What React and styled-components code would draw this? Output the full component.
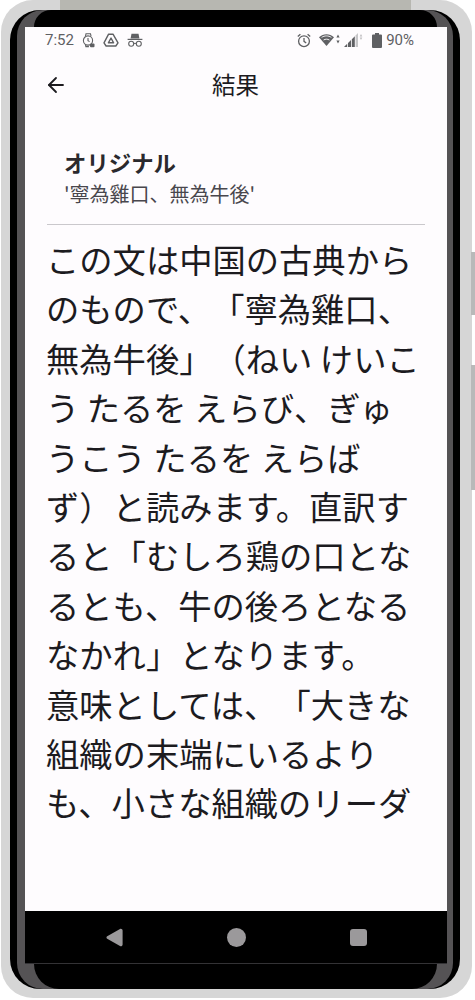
import React from "react";
import styled, { createGlobalStyle } from "styled-components";
import { ArrowLeft } from "lucide-react";

const Global = createGlobalStyle`
  html, body {
    margin: 0;
    padding: 0;
    background: #fff;
  }
`;

const Page = styled.div`
  width: 475px;
  height: 1000px;
  box-sizing: border-box;
  padding: 0 3px 2px 1px;
  overflow: hidden;
  font-family: "Noto Sans CJK JP", "Noto Sans", sans-serif;
  text-spacing-trim: space-all;
`;

const Shell = styled.div`
  position: relative;
  height: 100%;
  box-sizing: border-box;
  padding: 10px 12px 9px 9px;
  background: #d6d6d6;
  border-radius: 32px;
`;

const TopStrip = styled.div`
  position: absolute;
  top: 0;
  left: 59px;
  right: 61px;
  height: 10px;
  background: #b7b7b1;
`;

const SideKey = styled.div`
  position: absolute;
  right: -3px;
  top: ${(p) => p.$top}px;
  width: 4px;
  height: ${(p) => p.$h}px;
  background: #b9b9b9;
`;

const Bezel = styled.div`
  height: 100%;
  box-sizing: border-box;
  padding: 0 7px;
  background: #000;
  border-radius: 30px;
`;

const Inner = styled.div`
  height: 100%;
  box-sizing: border-box;
  padding: 0 6px 0 8px;
  background: #555355;
  border-radius: 26px;
`;

const Column = styled.div`
  height: 100%;
  display: flex;
  flex-direction: column;
`;

const TopBand = styled.div`
  height: 17px;
  margin: 0 10px 0 9px;
  background: #000;
  border-radius: 20px 20px 0 0;
`;

const Screen = styled.div`
  height: 884px;
  background: #fefcfe;
  display: flex;
  flex-direction: column;
  overflow: hidden;
`;

const StatusBar = styled.div`
  height: 26px;
  box-sizing: border-box;
  padding: 0 33px 0 20px;
  display: flex;
  align-items: center;
  justify-content: space-between;
  color: #5f6063;
  font: 400 15px "Roboto", sans-serif;
`;

const StatusGroup = styled.div`
  display: flex;
  align-items: center;
  gap: ${(p) => p.$gap || 8}px;
`;

const SignalSlot = styled.div`
  display: flex;
  margin: 0 1px 0 -5px;
`;

const AppBar = styled.div`
  height: 64px;
  box-sizing: border-box;
  padding: 0 1px 2px 0;
  position: relative;
  display: flex;
  align-items: center;
  justify-content: center;
  color: #1c1b1f;
  font-size: 23.5px;
`;

const BackButton = styled.div`
  position: absolute;
  left: 19px;
  top: 20px;
  display: flex;
`;

const Original = styled.div`
  padding: 30px 39px 0;
  height: 107px;
  box-sizing: border-box;
`;

const OriginalTitle = styled.div`
  font-size: 22.4px;
  font-weight: 700;
  line-height: 31px;
  color: #2a292d;
`;

const OriginalText = styled.div`
  font-size: 20px;
  line-height: 31px;
  color: #49474d;
  white-space: nowrap;
`;

const Divider = styled.div`
  height: 1px;
  margin: 0 22px;
  background: #cac8cc;
`;

const Body = styled.div`
  padding: 9px 25px 0 21px;
  font-size: 33.3px;
  line-height: 49.4px;
  color: #1c1b1f;
`;

const NavBar = styled.div`
  height: 52px;
  background: #000;
  display: flex;
  align-items: center;
  justify-content: center;
  gap: 104px;
`;

const NavCircle = styled.div`
  width: 19px;
  height: 19px;
  border-radius: 50%;
  background: #9b999b;
`;

const NavSquare = styled.div`
  width: 17px;
  height: 17px;
  border-radius: 3px;
  background: #9b999b;
`;

const ChinLine = styled.div`
  height: 1px;
  background: #333235;
`;

const Chin = styled.div`
  flex: 1;
  margin: 0 10px 0 9px;
  background: #000;
  border-radius: 0 0 26px 26px;
`;

const WatchIcon = () => (
  <svg width="13" height="15" viewBox="0 0 13 15" fill="none" stroke="currentColor" strokeWidth="1.1">
    <path d="M3.5 3 4 .8h4.5L9 3M3.5 12l.4 1.6h3" />
    <circle cx="6" cy="7.5" r="4.6" />
    <path d="M6 5v2.6l1.6 1" />
    <rect x="8" y="10.5" width="4.5" height="3.8" rx="1" fill="currentColor" stroke="none" />
  </svg>
);

const DriveIcon = () => (
  <svg width="16" height="14" viewBox="0 0 16 14" fill="none" stroke="currentColor" strokeWidth="1.4" strokeLinejoin="round">
    <path d="M5.6 1.2h4.4l5 8.6-2.2 3.2H3.1L1 9.8z" />
    <path d="M8 5 5.4 9.8h5.2z" />
  </svg>
);

const IncognitoIcon = () => (
  <svg width="16" height="14" viewBox="0 0 16 14" fill="none" stroke="currentColor">
    <path d="M3.6 5.6 4.5 .8h7l.9 4.8z" fill="currentColor" stroke="none" />
    <path d="M.6 6.4h14.8" strokeWidth="1.2" />
    <circle cx="4.2" cy="10.8" r="2.5" strokeWidth="1.1" />
    <circle cx="11.8" cy="10.8" r="2.5" strokeWidth="1.1" />
    <path d="M6.7 10.4h2.6" strokeWidth="1" />
  </svg>
);

const AlarmIcon = () => (
  <svg width="14" height="15" viewBox="0 0 14 15" fill="none" stroke="currentColor" strokeWidth="1.3">
    <circle cx="7" cy="8.2" r="5.4" />
    <path d="M7 5v3.4l2.2 1.6M.8 3.6 3.4 1.2M13.2 3.6 10.6 1.2" />
  </svg>
);

const WifiIcon = () => (
  <svg width="21" height="14" viewBox="0 0 21 14" fill="currentColor">
    <path d="M7.5 13 0 4.2C4.4.2 10.6.2 15 4.2z" />
    <path d="M2.6 4.4c3-2 6.8-2 9.8 0M4.6 7c1.8-1.1 4-1.1 5.8 0" stroke="#fefcfe" strokeWidth=".9" fill="none" />
    <path d="m19 1.5 1.6 3h-3.2zM19 10.5l1.6-3h-3.2z" />
  </svg>
);

const SignalIcon = () => (
  <svg width="20" height="14" viewBox="0 0 20 14" fill="currentColor">
    <path d="M1 14l3.2-3.2V14zM5 14v-4l3-3v7zM8.8 14V6.2l3-3V14z" />
    <path d="M12.6 14V2.4L15 0v14z" opacity=".35" />
    <path d="m18 1 1.3 2.4h-2.6zM18 7l1.3-2.4h-2.6z" opacity=".4" />
  </svg>
);

const BatteryIcon = () => (
  <svg width="10" height="15" viewBox="0 0 10 15" fill="currentColor">
    <path d="M3 0h4v1.4h2a1 1 0 0 1 1 1V14a1 1 0 0 1-1 1H1a1 1 0 0 1-1-1V2.4a1 1 0 0 1 1-1h2z" />
  </svg>
);

const NavBack = () => (
  <svg width="17" height="19" viewBox="0 0 17 19" fill="#9b999b">
    <path d="M1.2 8.2 14 .9c1.2-.6 2.6.2 2.6 1.6v14c0 1.4-1.4 2.2-2.6 1.6L1.2 10.8c-1-.6-1-2 0-2.6z" />
  </svg>
);

const App = () => {
  return (
    <Page>
      <Global />
      <Shell>
        <TopStrip />
        <SideKey $top={252} $h={63} />
        <SideKey $top={365} $h={125} />
        <Bezel>
          <Inner>
            <Column>
              <TopBand />
              <Screen>
                <StatusBar>
                  <StatusGroup>
                    <span>7:52</span>
                    <WatchIcon />
                    <DriveIcon />
                    <IncognitoIcon />
                  </StatusGroup>
                  <StatusGroup>
                    <AlarmIcon />
                    <WifiIcon />
                    <SignalSlot>
                      <SignalIcon />
                    </SignalSlot>
                    <StatusGroup $gap={4}>
                      <BatteryIcon />
                      <span>90%</span>
                    </StatusGroup>
                  </StatusGroup>
                </StatusBar>
                <AppBar>
                  <BackButton>
                    <ArrowLeft size={24} strokeWidth={1.8} />
                  </BackButton>
                  結果
                </AppBar>
                <Original>
                  <OriginalTitle>オリジナル</OriginalTitle>
                  <OriginalText>'寧為雞口、無為牛後'</OriginalText>
                </Original>
                <Divider />
                <Body>
                  この文は中国の古典からのもので、「寧為雞口、無為牛後」（ねい けいこう たるを えらび、ぎゅうこう たるを えらばず）と読みます。直訳すると「むしろ鶏の口となるとも、牛の後ろとなるなかれ」となります。
                  <br />
                  意味としては、「大きな組織の末端にいるよりも、小さな組織のリーダ
                </Body>
              </Screen>
              <NavBar>
                <NavBack />
                <NavCircle />
                <NavSquare />
              </NavBar>
              <ChinLine />
              <Chin />
            </Column>
          </Inner>
        </Bezel>
      </Shell>
    </Page>
  );
};

export default App;
